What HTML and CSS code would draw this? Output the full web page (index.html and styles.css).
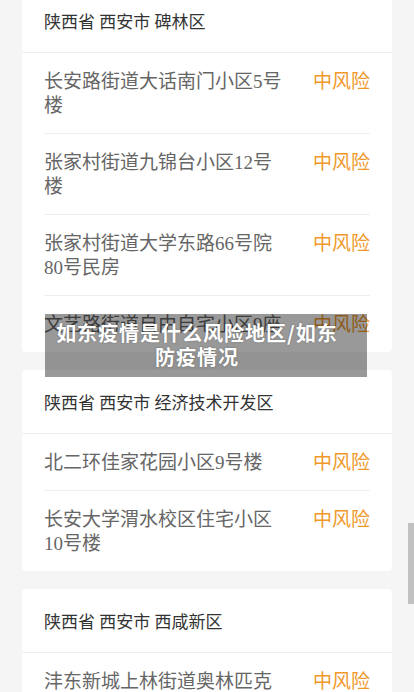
FILE: index.html
```html
<!DOCTYPE html>
<html lang="zh-CN">
<head>
    <meta charset="UTF-8">
    <title>如东疫情是什么风险地区/如东防疫情况</title>
    <link rel="stylesheet" href="styles.css">
</head>
<body>
<div class="list">
    <div class="card">
        <div class="area">陕西省 西安市 碑林区</div>
        <div class="row"><span class="place">长安路街道大话南门小区5号楼</span><span class="risk">中风险</span></div>
        <div class="row"><span class="place">张家村街道九锦台小区12号楼</span><span class="risk">中风险</span></div>
        <div class="row"><span class="place">张家村街道大学东路66号院80号民房</span><span class="risk">中风险</span></div>
        <div class="row"><span class="place">文艺路街道自由自宅小区9座</span><span class="risk">中风险</span></div>
    </div>
    <div class="card">
        <div class="area">陕西省 西安市 经济技术开发区</div>
        <div class="row"><span class="place">北二环佳家花园小区9号楼</span><span class="risk">中风险</span></div>
        <div class="row"><span class="place">长安大学渭水校区住宅小区10号楼</span><span class="risk">中风险</span></div>
    </div>
    <div class="card">
        <div class="area">陕西省 西安市 西咸新区</div>
        <div class="row"><span class="place">沣东新城上林街道奥林匹克花园小区</span><span class="risk">中风险</span></div>
    </div>
</div>

<div class="title">如东疫情是什么风险地区/如东防疫情况</div>
<div class="thumb"></div>
</body>
</html>
```

FILE: styles.css
```css
html, body {
    overflow: hidden;
}

body {
    margin: 0;
    padding: 0;
    background: #f5f5f5;
    font-family: "Liberation Serif", "Noto Sans CJK SC", serif;
}

.list {
    margin-top: -11px;
    padding: 0 22px;
    display: flex;
    flex-direction: column;
    gap: 18px;
}

.card {
    background: #fff;
    border-radius: 4px;
}

.area {
    padding: 22px 22px 17px;
    font-size: 17px;
    line-height: 24px;
    color: #333;
    border-bottom: 1px solid #eee;
}

.row {
    margin: 0 22px;
    padding: 17px 0 15px;
    display: flex;
    justify-content: space-between;
    align-items: flex-start;
    border-bottom: 1px solid #eee;
    font-size: 19px;
    line-height: 24px;
}

.row:last-child {
    border-bottom: none;
}

.place {
    width: 242px;
    color: #666;
}

.risk {
    color: #f0992a;
    white-space: nowrap;
}

.title {
    position: absolute;
    top: 314px;
    left: 45px;
    width: 284px;
    padding: 7px 28px 8px 10px;
    background: rgba(0, 0, 0, 0.4);
    color: #fff;
    font-family: "Noto Sans CJK SC", sans-serif;
    font-size: 20px;
    font-weight: bold;
    line-height: 24px;
    letter-spacing: 1px;
    text-align: center;
    text-shadow: 0 0 2px rgba(0, 0, 0, 0.3);
}

.thumb {
    position: absolute;
    top: 523px;
    right: 0;
    width: 6px;
    height: 81px;
    background: #c1c1c1;
}
```
